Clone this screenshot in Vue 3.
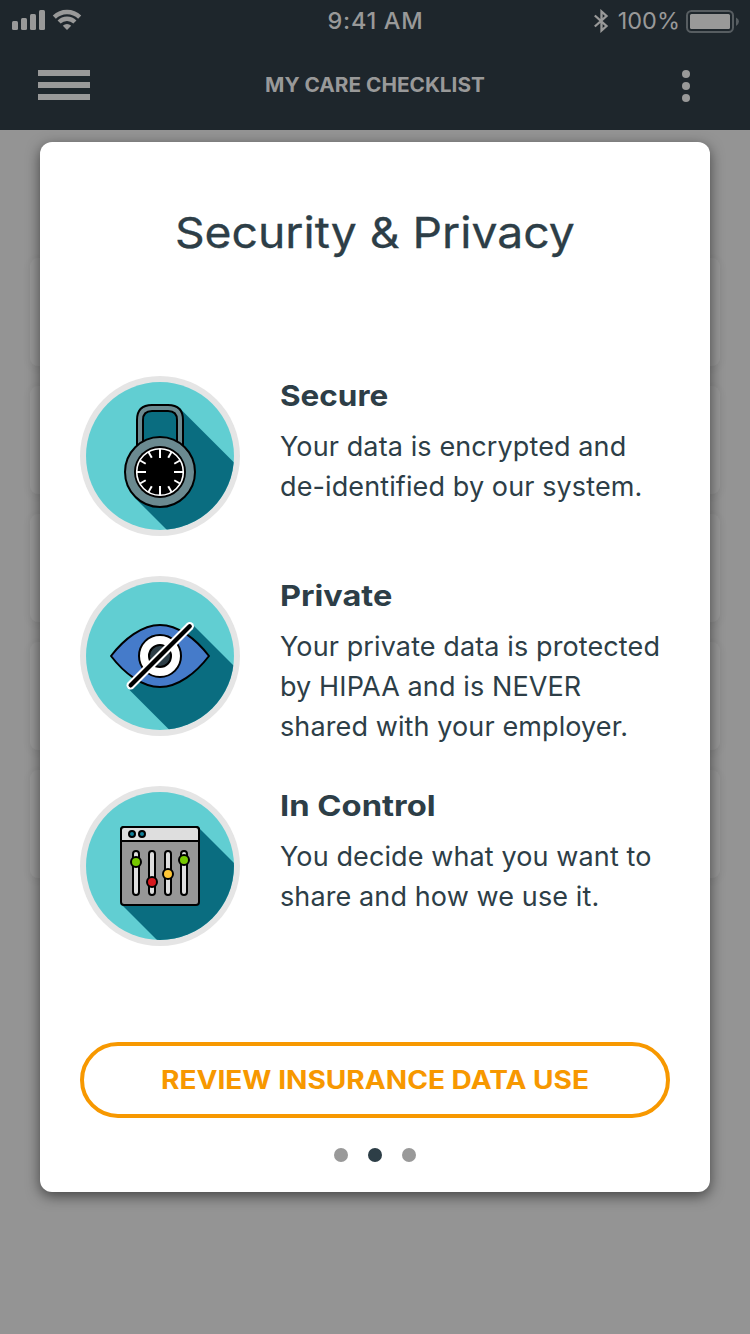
<script setup>
const features = [
  { id: 'lock', title: 'Secure', lines: ['Your data is encrypted and', 'de-identified by our system.'] },
  { id: 'eye', title: 'Private', lines: ['Your private data is protected', 'by HIPAA and is NEVER', 'shared with your employer.'] },
  { id: 'panel', title: 'In Control', lines: ['You decide what you want to', 'share and how we use it.'] },
]
const shadows = {
  lock: 'M60 32H100L102.5 35L180 112.5V180H113L55 122L60 96Z',
  eye: 'M114 50L180 116V180H115.500L49.500 114L80 80Z',
  panel: 'M119.500 42.500L180 103V180H103L42 119L80 80Z',
}
const ticks = Array.from({ length: 12 }, (_, i) => ({ angle: i * 30, end: i % 3 ? -16.5 : -14 }))
const sliders = [
  { x: 56, y: 76, color: '#76c800' },
  { x: 72, y: 96, color: '#d7191f' },
  { x: 88, y: 88, color: '#ffc636' },
  { x: 104, y: 74, color: '#76c800' },
]
</script>

<template>
  <div class="screen">
    <header class="top">
      <div class="status">
        <svg class="signal" width="72" height="24" viewBox="0 0 72 24" fill="#999">
          <rect x="0" y="13" width="6" height="9" rx="1.500" />
          <rect x="9" y="10" width="6" height="12" rx="1.500" />
          <rect x="18" y="6" width="6" height="16" rx="1.500" />
          <rect x="27" y="2" width="6" height="20" rx="1.500" />
          <g fill="none" stroke="#999" stroke-width="4.400">
            <path d="M42.300 9.200A18.200 18.200 0 0 1 67.700 9.200" />
            <path d="M47.100 14A11.300 11.300 0 0 1 62.900 14" />
          </g>
          <path d="M55 22L50.800 17.800A6 6 0 0 1 59.200 17.800Z" />
        </svg>
        <span class="time">9:41 AM</span>
        <div class="power">
          <svg width="16" height="24" viewBox="0 0 16 24" fill="none" stroke="#999" stroke-width="2.300">
            <path d="M1.800 6.500L13.500 17L8.500 21.500V2.500L13.500 7L1.800 17.500" />
          </svg>
          <span class="percent">100%</span>
          <svg width="54" height="24" viewBox="0 0 54 24">
            <rect x="1" y="2" width="46" height="21" rx="4.500" fill="none" stroke="#575d61" stroke-width="2" />
            <rect x="4" y="5" width="40" height="15" rx="1.500" fill="#999" />
            <path d="M50 8.500Q53 10 53 12.500T50 17Z" fill="#575d61" />
          </svg>
        </div>
      </div>
      <nav class="nav">
        <div class="menu"><i /><i /><i /></div>
        <span class="page">MY CARE CHECKLIST</span>
        <div class="more"><i /><i /><i /></div>
      </nav>
    </header>
    <main class="stage">
      <div class="rows"><div v-for="n in 5" :key="n" class="row" /></div>
      <section class="dialog">
        <h1><span>Security &amp; Privacy</span></h1>
        <div class="features">
          <article v-for="f in features" :key="f.id" class="feature" :class="f.id">
            <svg class="badge" width="160" height="160" viewBox="0 0 160 160">
              <defs><clipPath :id="'clip-' + f.id"><circle cx="80" cy="80" r="74" /></clipPath></defs>
              <circle cx="80" cy="80" r="80" fill="#e5e5e5" />
              <circle cx="80" cy="80" r="74" fill="#61ced2" />
              <path :d="shadows[f.id]" fill="#0a6d80" :clip-path="`url(#clip-${f.id})`" />
              <g v-if="f.id === 'lock'">
                <path d="M60 76V44Q60 32 72 32H88Q100 32 100 44V76" fill="none" stroke="#000" stroke-width="8" />
                <path d="M60 76V44Q60 32 72 32H88Q100 32 100 44V76" fill="none" stroke="#6b8a90" stroke-width="4" />
                <circle cx="80" cy="96" r="35" fill="#6b8a90" stroke="#000" stroke-width="2" />
                <circle cx="80" cy="96" r="26" fill="#000" />
                <circle cx="80" cy="96" r="23.300" fill="none" stroke="#fff" stroke-width="1.600" />
                <g transform="translate(80 96)" stroke="#fff" stroke-width="2">
                  <line v-for="t in ticks" :key="t.angle" x1="0" y1="-23" x2="0" :y2="t.end" :transform="`rotate(${t.angle})`" />
                </g>
              </g>
              <g v-else-if="f.id === 'eye'" stroke="#000" stroke-width="2" stroke-linejoin="round" stroke-linecap="round">
                <path d="M31 80C44 63 62 49 80 49S116 63 129 80C116 97 98 111 80 111S44 97 31 80Z" fill="#457bca" />
                <circle cx="80" cy="80" r="21" fill="#fff" />
                <circle cx="80" cy="80" r="11" fill="#2d3e47" />
                <path d="M50.700 109.300L109.700 50.300" stroke="#fff" stroke-width="8.400" />
                <path d="M50.700 109.300L109.700 50.300" stroke-width="4.400" />
              </g>
              <g v-else stroke="#000" stroke-width="2">
                <rect x="41" y="41" width="78" height="78" rx="3" fill="#979797" />
                <path d="M41 55V44Q41 41 44 41H116Q119 41 119 44V55Z" fill="#dedede" />
                <circle cx="52" cy="48" r="3" fill="#11809a" />
                <circle cx="62" cy="48" r="3" fill="#11809a" />
                <g v-for="s in sliders" :key="s.x">
                  <rect :x="s.x - 3" y="65" width="6" height="44" rx="3" fill="#dedede" />
                  <circle :cx="s.x" :cy="s.y" r="5" :fill="s.color" />
                </g>
              </g>
            </svg>
            <div class="copy">
              <h2><span>{{ f.title }}</span></h2>
              <p v-for="line in f.lines" :key="line">{{ line }}</p>
            </div>
          </article>
        </div>
        <button class="review"><span>REVIEW INSURANCE DATA USE</span></button>
        <div class="dots"><i /><i class="on" /><i /></div>
      </section>
    </main>
  </div>
</template>

<style>
body { margin: 0; background: #949494; }
</style>

<style scoped>
.screen { width: 750px; height: 1334px; overflow: hidden; background: #949494; font-family: Inter, "Liberation Sans", sans-serif; color: #2d3e47; }
.top { position: relative; z-index: 1; height: 130px; background: #1e262c; color: #999; }
.status { display: grid; grid-template-columns: 1fr auto 1fr; align-items: start; height: 40px; padding: 0 11px 0 12px; }
.signal { margin-top: 8px; }
.time { font-size: 23.5px; font-weight: 500; line-height: 42px; letter-spacing: 0.7px; }
.power { display: flex; justify-content: flex-end; align-items: center; margin: 8px -1px 0 0; height: 25px; }
.percent { margin: 0 6px 0 9px; font-size: 23.5px; line-height: 25px; }
.nav { display: grid; grid-template-columns: 52px 1fr 52px; align-items: center; height: 90px; padding: 0 60px 0 38px; }
.menu { display: grid; gap: 6px; }
.menu i { height: 6px; background: #999; }
.page { margin-left: 22px; font-size: 19.5px; font-weight: 700; line-height: 30px; text-align: center; white-space: nowrap; transform: scaleX(1.065); }
.more { display: grid; gap: 4px; justify-self: end; margin-top: 2px; }
.more i { width: 8px; height: 8px; border-radius: 50%; background: #999; }
.stage { position: relative; padding: 12px 40px 0; }
.rows { position: absolute; left: 30px; top: 128px; width: 690px; display: grid; gap: 20px; }
.row { height: 108px; border-radius: 8px; background: #979797; box-shadow: 0 2px 10px rgba(0, 0, 0, 0.06); }
.dialog { position: relative; box-sizing: border-box; height: 1050px; padding: 60px 40px 0; border-radius: 12px; background: #fff; box-shadow: 0 4px 14px rgba(0, 0, 0, 0.55); }
h1 { margin: 0; height: 60px; font-size: 43px; font-weight: 400; line-height: 60px; text-align: center; white-space: nowrap; }
h1 span { display: inline-block; transform: scaleX(1.076); -webkit-text-stroke: 0.3px #2d3e47; }
.features { margin-top: 114px; }
.feature { display: flex; gap: 40px; height: 200px; }
.eye { height: 210px; }
.badge { flex: none; }
.copy { padding-top: 1px; white-space: nowrap; }
h2 { margin: 0 0 12px; font-size: 29px; font-weight: 700; line-height: 38px; }
h2 span { display: inline-block; transform: scaleX(1.085); transform-origin: left; }
.eye h2 span { transform: scaleX(1.12); }
.panel h2 span { transform: scaleX(1.13); }
p { margin: 0; font-size: 27px; line-height: 40px; letter-spacing: 0.11px; }
.review { display: block; box-sizing: border-box; width: 590px; height: 76px; margin-top: 56px; padding: 0; border: 4px solid #f79800; border-radius: 38px; background: #fff; color: #f79800; font: 700 25px/66px Inter, "Liberation Sans", sans-serif; white-space: nowrap; }
.review span { display: block; margin-top: -1px; transform: scaleX(1.123); }
.dots { display: flex; justify-content: center; gap: 20px; margin-top: 30px; }
.dots i { width: 14px; height: 14px; border-radius: 50%; background: #999; }
.dots .on { background: #2d3e47; }
</style>
